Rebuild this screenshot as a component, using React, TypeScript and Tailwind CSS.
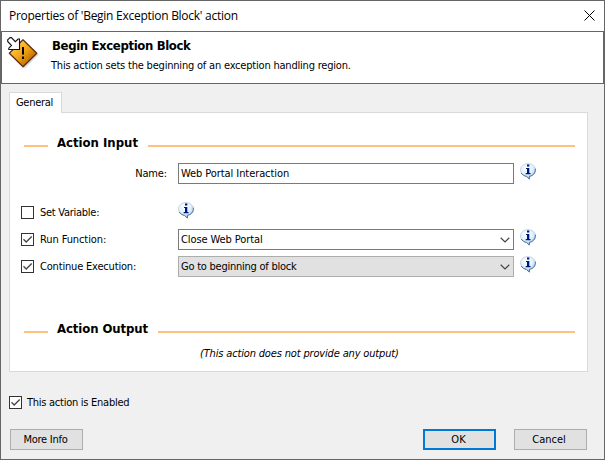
import React from "react";

function InfoIcon() {
  return (
    <svg width="17" height="17" viewBox="0 0 17 17" className="block shrink-0">
      <defs>
        <radialGradient id="bubble" cx="0.42" cy="0.3" r="0.7">
          <stop offset="0" stopColor="#ffffff" />
          <stop offset="0.55" stopColor="#dff2ff" />
          <stop offset="1" stopColor="#9cc8ee" />
        </radialGradient>
      </defs>
      <path d="M8 .6C3.700.6.5 3.300.5 7c0 3.300 2.200 5.500 5.800 6.400L9.300 16.200l.2-2.800c3.400-.6 6-3 6-6.200C15.500 3.400 12.300.6 8 .6Z" fill="url(#bubble)" stroke="#c3ced8" strokeWidth=".8" />
      <path d="M15.400 5.700c.3 4.500-2.600 7-5.900 7.600L9.300 16 6.500 13.400C4.300 13 2.300 11.800 1.200 10" fill="none" stroke="#4d6f94" strokeWidth="1" />
      <path d="M7 1.500h2.300v2H7zM6 5h3.300v5H10.500v1.200H5.700V10H7V6.100H6z" fill="#00157c" />
    </svg>
  );
}

function WarningIcon() {
  return (
    <svg width="34" height="34" viewBox="0 0 34 34" className="block">
      <defs>
        <linearGradient id="amber" x1="0.2" y1="0.2" x2="0.75" y2="0.75">
          <stop offset="0" stopColor="#ffc93a" />
          <stop offset="0.5" stopColor="#f2a51c" />
          <stop offset="1" stopColor="#c87200" />
        </linearGradient>
      </defs>
      <path d="M17 4 31.500 17.500 17.500 31.500 4 18z" fill="#d4d4d4" />
      <path d="M16 2.800 29.800 16.300 16 29.800 2.300 16.300z" fill="url(#amber)" stroke="#5b2b18" strokeWidth="1.200" strokeLinejoin="round" />
      <path d="M15 10h2v7.500h-2zM15 19.500h2v2.500h-2z" fill="#000" />
      <path d="M3 .6.7 2.800v1.700l3.800 4-2.700 2.700v1.300h10.700V2h-1.400L8.300 4.700 4.400.6z" fill="#fff" stroke="#111" strokeWidth="1.100" />
    </svg>
  );
}

function Check({ on = true }: { on?: boolean }) {
  return (
    <span className="block size-[13px] shrink-0 border border-[#333] bg-white">
      {on && (
        <svg width="11" height="11" viewBox="0 0 11 11" className="block">
          <path d="M1.500 5.300 4.200 8 9.700 2.500" fill="none" stroke="#444" strokeWidth="1.300" />
        </svg>
      )}
    </span>
  );
}

function Chevron() {
  return (
    <svg width="10" height="6" viewBox="0 0 10 6" className="mr-[3px] block">
      <path d="m.7.7 4.300 4.200L9.300.7" fill="none" stroke="#444" strokeWidth="1.200" />
    </svg>
  );
}

function Section({ title, textClass }: { title: string; textClass: string }) {
  return (
    <div className="flex h-4 items-start pl-[14px] pr-3">
      <span className="mt-[11px] h-[2px] w-6 bg-[#ffc080]" />
      <span className={"ml-[9px] mt-px shrink-0 text-[13px] font-bold leading-4 " + textClass}>{title}</span>
      <span className="mt-[11px] h-[2px] flex-1 bg-[#ffc080]" />
    </div>
  );
}

export default function App() {
  return (
    <div className="flex h-[460px] w-[605px] flex-col whitespace-nowrap border border-[#666] bg-[#f0f0f0] font-['DejaVu_Sans_Condensed','DejaVu_Sans',sans-serif] text-[11px] leading-[14px] text-black [font-stretch:condensed]">
      <div className="flex h-[30px] shrink-0 items-center justify-between bg-white pl-2 pr-[9px]">
        <span className="font-['Open_Sans',sans-serif] text-[12px] tracking-[-0.27px] [font-stretch:normal]">Properties of 'Begin Exception Block' action</span>
        <svg width="11" height="11" viewBox="0 0 11 11" className="block -translate-y-px">
          <path d="m.5.5 10 10M10.500.5l-10 10" stroke="#000" strokeWidth="1" />
        </svg>
      </div>
      <div className="flex h-[53px] shrink-0 border border-[#666] bg-white pl-[5px] pt-[5px]">
        <WarningIcon />
        <div className="ml-[10px]">
          <div className="pl-px pt-px text-[13px] font-bold leading-4 tracking-[-0.36px]">Begin Exception Block</div>
          <div className="mt-[5px] tracking-[-0.2px]">This action sets the beginning of an exception handling region.</div>
        </div>
      </div>

      <div className="mx-2 mt-2 w-[579px]">
        <div className="relative z-10 -mb-px h-[21px] w-[53px] border border-b-0 border-[#d9d9d9] bg-white pl-[6px] pt-[3px] tracking-[-0.3px]">General</div>
        <div className="h-[260px] border border-[#d9d9d9] bg-white">
          <div className="pt-[21px]">
            <Section title="Action Input" textClass="w-[91px]" />
          </div>
          <div className="mt-[13px] flex h-[21px]">
            <span className="w-[168px] pr-[11px] pt-[4px] text-right tracking-[-0.15px]">Name:</span>
            <span className="flex h-[21px] w-[336px] items-center border border-[#7a7a7a] pl-[2px] tracking-[-0.08px]">Web Portal Interaction</span>
            <span className="ml-[6px]"><InfoIcon /></span>
          </div>
          <div className="mt-[18px] flex h-[21px] items-center pl-[11px]">
            <Check on={false} />
            <span className="ml-[6px] w-[138px] tracking-[-0.27px]">Set Variable:</span>
            <span className="-mt-[4px]"><InfoIcon /></span>
          </div>
          <div className="mt-[6px] flex h-[21px] items-center pl-[11px]">
            <Check />
            <span className="ml-[6px] w-[138px] tracking-[-0.1px]">Run Function:</span>
            <span className="flex h-[21px] w-[336px] items-center justify-between border border-[#7a7a7a] pl-[2px] tracking-[-0.1px]">Close Web Portal<Chevron /></span>
            <span className="-mt-[4px] ml-[6px]"><InfoIcon /></span>
          </div>
          <div className="mt-[6px] flex h-[21px] items-center pl-[11px]">
            <Check />
            <span className="ml-[6px] w-[138px] tracking-[-0.18px]">Continue Execution:</span>
            <span className="flex h-[21px] w-[336px] items-center justify-between border border-[#adadad] bg-[#e1e1e1] pl-[2px] tracking-[-0.24px]">Go to beginning of block<Chevron /></span>
            <span className="-mt-[4px] ml-[6px]"><InfoIcon /></span>
          </div>
          <div className="mt-[43px]">
            <Section title="Action Output" textClass="w-[101px] tracking-[-0.08px]" />
          </div>
          <div className="mt-[11px] pl-[190px] italic tracking-[-0.16px]">(This action does not provide any output)</div>
        </div>
      </div>

      <div className="mt-6 flex h-[13px] items-start pl-2">
        <Check />
        <span className="ml-[5px] tracking-[-0.26px]">This action is Enabled</span>
      </div>
      <div className="mt-5 flex h-[21px] pl-[9px]">
        <button className="w-[73px] border border-[#adadad] bg-[#e1e1e1] pr-[2px] tracking-[-0.25px]">More Info</button>
        <button className="ml-[340px] w-[73px] border-2 border-[#0078d7] bg-[#e1e1e1] pr-[2px]">OK</button>
        <button className="ml-[18px] w-[73px] border border-[#adadad] bg-[#e1e1e1] pr-[3px]">Cancel</button>
      </div>
    </div>
  );
}
